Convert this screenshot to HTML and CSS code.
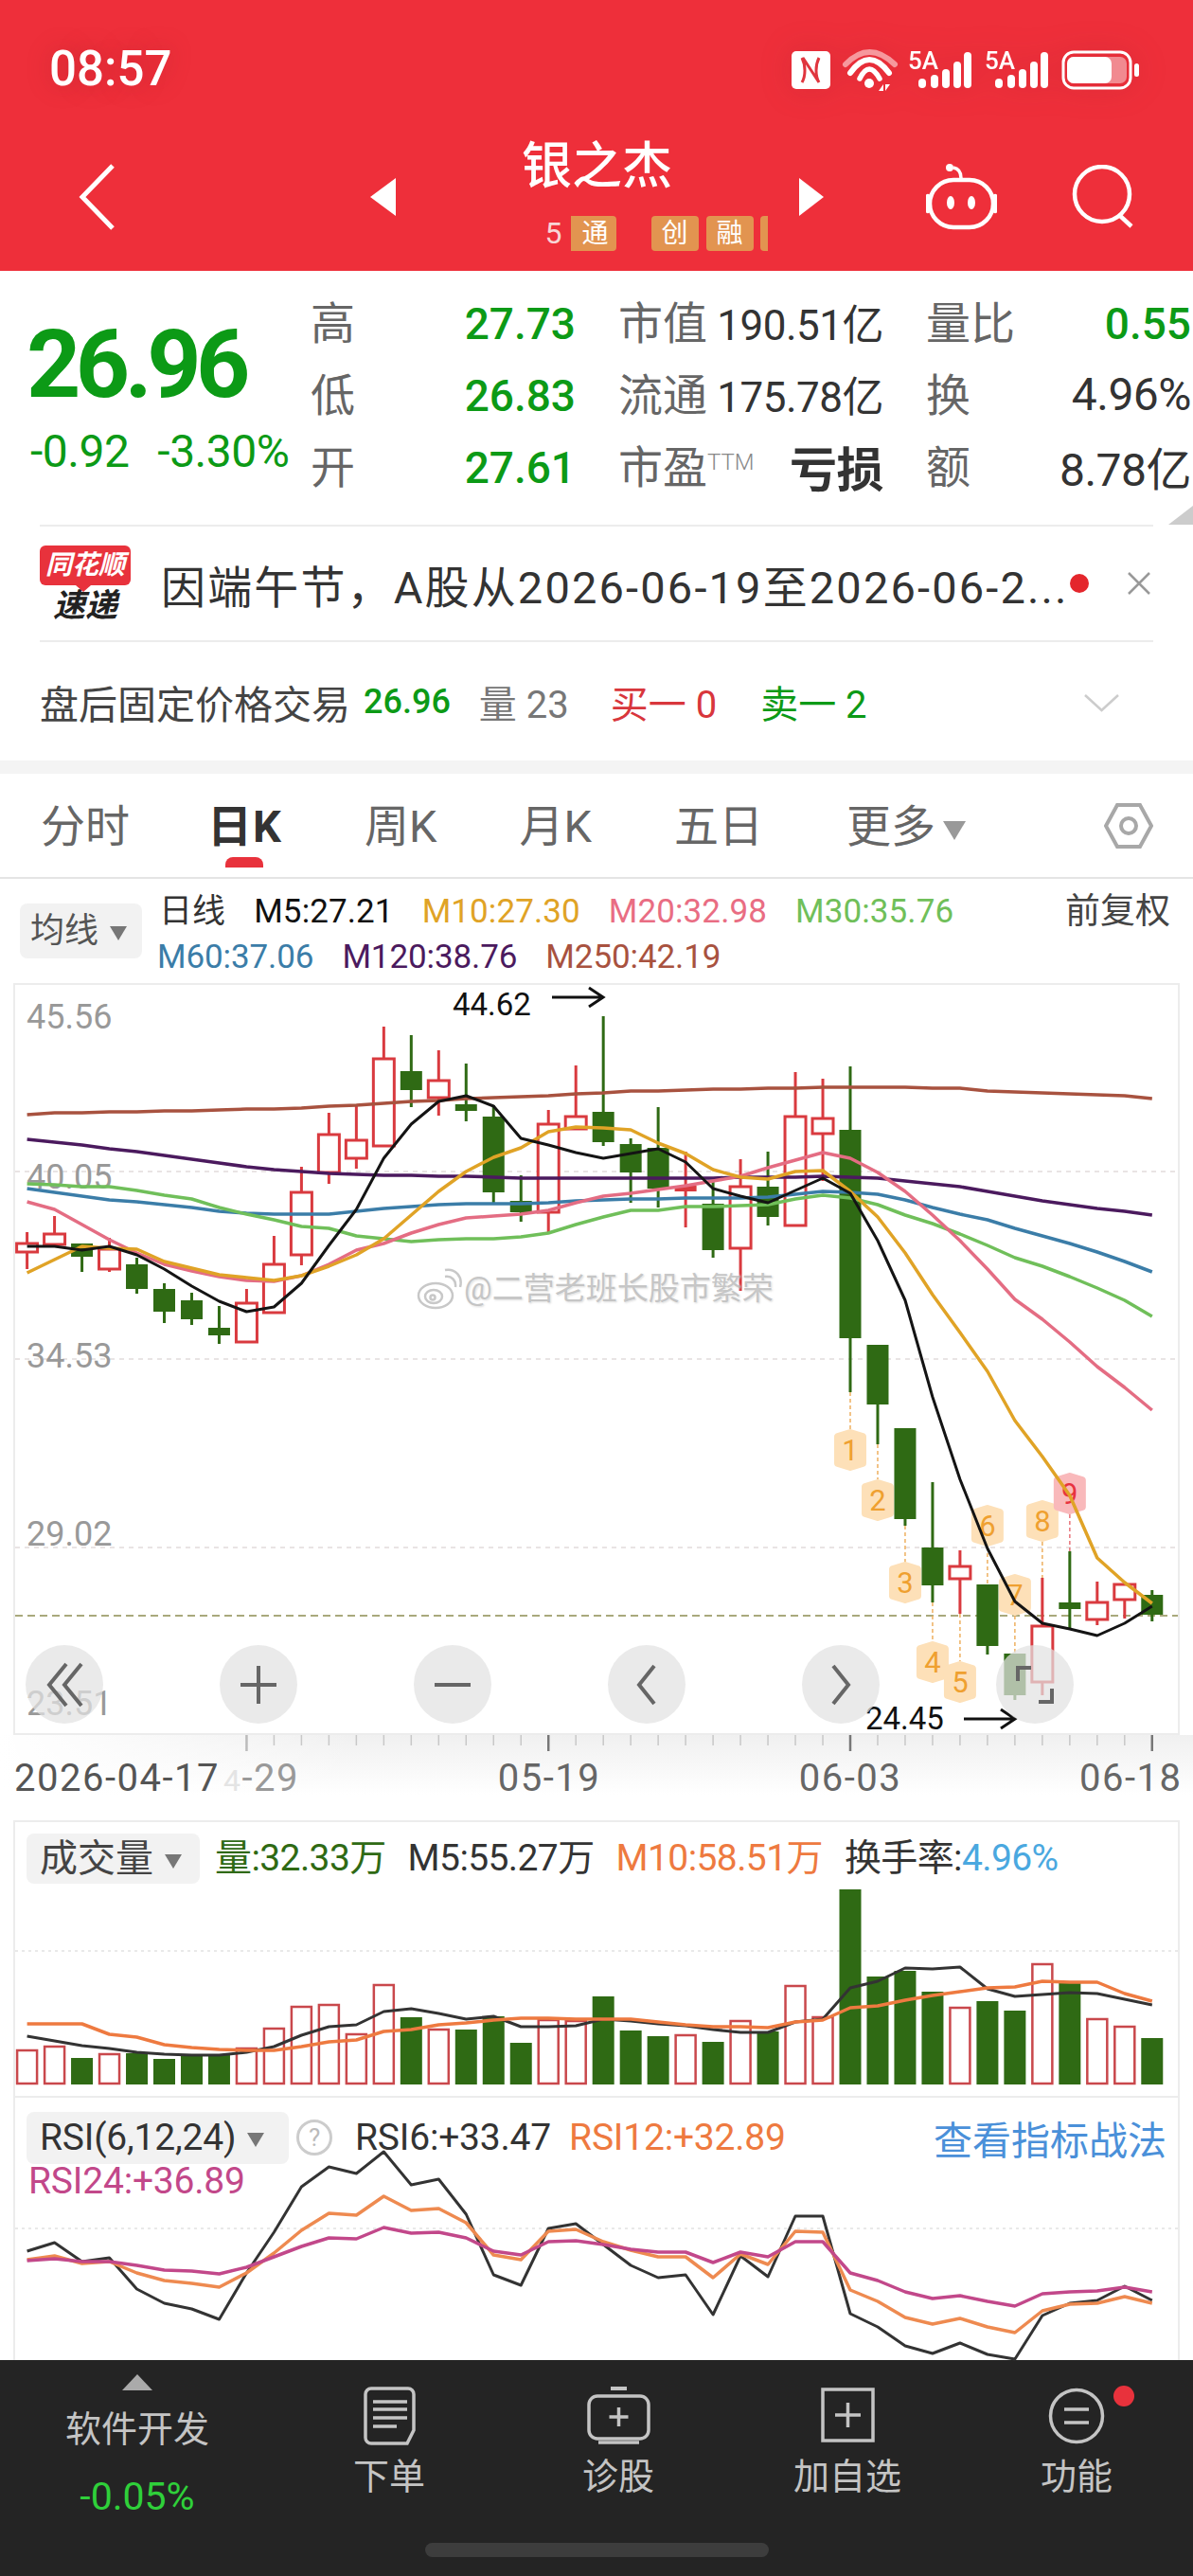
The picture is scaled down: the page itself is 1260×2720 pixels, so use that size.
FILE: index.html
```html
<!DOCTYPE html>
<html lang="zh-CN">
<head>
    <meta charset="UTF-8">
    <meta name="viewport" content="width=device-width, initial-scale=1.0">
    <title>银之杰</title>
    <link rel="stylesheet" href="styles.css">
</head>
<body>
<div class="phone">

    <header class="top">
        <div class="status-bar">
            <span class="time">08:57</span>
            <svg class="status-icons" width="367" height="45" viewBox="0 0 367 45">
                <rect x="0" y="2" width="41" height="40" rx="5" fill="#fff"/>
                <path d="M11 9c4 8 4 19 0 26M12 9l17 26M29 9c-4 8-4 19 0 26" fill="none" stroke="#e0353e" stroke-width="3"/>
                <path d="M57 16Q82 -10 109 16" fill="none" stroke="#f6989d" stroke-width="6" stroke-linecap="round"/>
                <path d="M62 25Q82 -3 103 25" fill="none" stroke="#fff" stroke-width="6" stroke-linecap="round"/>
                <path d="M72 31Q82 11 93 31" fill="none" stroke="#fff" stroke-width="5.5" stroke-linecap="round"/>
                <circle cx="82" cy="36" r="5" fill="#fff"/>
                <path d="M92 44l5-7v7zM99 37v7l5-7z" fill="#fff"/>
                <g fill="#fff">
                    <text class="net" x="123" y="21">5A</text>
                    <rect x="134" y="31" width="8" height="10" rx="4"/>
                    <rect x="147" y="27" width="8" height="14" rx="4"/>
                    <rect x="159" y="21" width="8" height="20" rx="4"/>
                    <rect x="171" y="13" width="8" height="28" rx="4"/>
                    <rect x="182" y="3" width="8" height="38" rx="4"/>
                    <text class="net" x="204" y="21">5A</text>
                    <rect x="215" y="31" width="8" height="10" rx="4"/>
                    <rect x="228" y="27" width="8" height="14" rx="4"/>
                    <rect x="240" y="21" width="8" height="20" rx="4"/>
                    <rect x="252" y="13" width="8" height="28" rx="4"/>
                    <rect x="263" y="3" width="8" height="38" rx="4"/>
                </g>
                <rect x="287" y="3" width="71" height="38" rx="11" fill="none" stroke="#fff" stroke-width="3"/>
                <rect x="291" y="8" width="63" height="28" rx="7" fill="#f18a90"/>
                <rect x="291" y="8" width="47" height="28" rx="7" fill="#fff"/>
                <rect x="362" y="15" width="5" height="14" rx="2.5" fill="#fff"/>
            </svg>
        </div>
        <div class="title-bar">
            <svg class="back" width="39" height="70" viewBox="0 0 39 70"><path d="M36 2L4 35l32 33" fill="none" stroke="#fff" stroke-width="5"/></svg>
            <div class="stock-switch">
                <span class="tri tri-left"></span>
                <div class="stock-name">
                    <div class="stock-title">银之杰</div>
                    <div class="stock-tags">
                        <span class="tag-num">5</span>
                        <span class="tag tag-cut">通</span>
                        <span class="tag tag-gap">创</span>
                        <span class="tag">融</span>
                        <span class="tag tag-end"></span>
                    </div>
                </div>
                <span class="tri tri-right"></span>
            </div>
            <div class="title-actions">
                <svg width="75" height="70" viewBox="0 0 75 70" fill="none" stroke="#fff" stroke-width="4.5">
                    <rect x="4" y="17" width="67" height="50" rx="25"/>
                    <path d="M37 15c0-6-3-10-8-11" stroke-width="3.5"/>
                    <circle cx="25" cy="4" r="4" fill="#fff" stroke="none"/>
                    <path d="M2 34v16M73 34v16" stroke-linecap="round"/>
                    <ellipse cx="26" cy="41" rx="4" ry="7" fill="#fff" stroke="none"/>
                    <ellipse cx="48" cy="41" rx="4" ry="7" fill="#fff" stroke="none"/>
                </svg>
                <svg width="66" height="68" viewBox="0 0 66 68" fill="none" stroke="#fff" stroke-width="4.5">
                    <circle cx="32" cy="31" r="29"/>
                    <path d="M50 53l13 12"/>
                </svg>
            </div>
        </div>
    </header>

    <section class="quote">
        <div class="quote-price">
            <div class="price">26.96</div>
            <div class="change"><span>-0.92</span><span>-3.30%</span></div>
        </div>
        <div class="quote-grid">
            <div class="stat"><span class="stat-label">高</span><span class="val-green">27.73</span></div>
            <div class="stat"><span class="stat-label">市值</span><span class="val">190.51亿</span></div>
            <div class="stat"><span class="stat-label">量比</span><span class="val-green">0.55</span></div>
            <div class="stat"><span class="stat-label">低</span><span class="val-green">26.83</span></div>
            <div class="stat"><span class="stat-label">流通</span><span class="val">175.78亿</span></div>
            <div class="stat"><span class="stat-label">换</span><span class="val val-right">4.96%</span></div>
            <div class="stat"><span class="stat-label">开</span><span class="val-green">27.61</span></div>
            <div class="stat"><span class="stat-label">市盈<sup class="ttm">TTM</sup></span><span class="val val-strong">亏损</span></div>
            <div class="stat"><span class="stat-label">额</span><span class="val val-right">8.78亿</span></div>
        </div>
        <span class="corner-fold"></span>
    </section>

    <section class="notice">
        <div class="notice-logo">
            <span class="notice-flag">同花顺</span>
            <span class="notice-sub">速递</span>
        </div>
        <div class="notice-text">因端午节，A股从2026-06-19至2026-06-2...</div>
        <span class="notice-dot"></span>
        <svg class="notice-close" width="26" height="24" viewBox="0 0 26 24"><path d="M2 1l22 22M24 1L2 23" stroke="#999" stroke-width="2.5"/></svg>
    </section>

    <section class="after-hours">
        <span class="ah-title">盘后固定价格交易</span>
        <span class="ah-green ah-price">26.96</span>
        <span class="ah-grey ah-vol">量&nbsp;23</span>
        <span class="ah-red">买一&nbsp;0</span>
        <span class="ah-green ah-sell">卖一&nbsp;2</span>
        <svg class="ah-more" width="37" height="19" viewBox="0 0 37 19"><path d="M1 1l17.500 16L36 1" fill="none" stroke="#ccc" stroke-width="2.500"/></svg>
    </section>
    <div class="band"></div>

    <nav class="tabs">
        <span class="tab">分时</span>
        <span class="tab tab-active">日K</span>
        <span class="tab">周K</span>
        <span class="tab">月K</span>
        <span class="tab">五日</span>
        <span class="tab tab-more">更多<i class="caret caret-tab"></i></span>
        <svg class="tab-gear" width="52" height="50" viewBox="0 0 52 50" fill="none" stroke="#a8a8a8" stroke-width="4">
            <path d="M14 3h24l12 22-12 22H14L2 25z"/>
            <circle cx="26" cy="25" r="8"/>
        </svg>
    </nav>

    <section class="ma-legend">
        <div class="pill pill-ma">均线<i class="caret"></i></div>
        <div class="ma-rows">
            <div class="ma-row">
                <span class="ma-kind">日线</span>
                <span class="c-m5">M5:27.21</span>
                <span class="c-m10">M10:27.30</span>
                <span class="c-m20">M20:32.98</span>
                <span class="c-m30">M30:35.76</span>
            </div>
            <div class="ma-row ma-row-tight">
                <span class="c-m60">M60:37.06</span>
                <span class="c-m120">M120:38.76</span>
                <span class="c-m250">M250:42.19</span>
            </div>
        </div>
        <span class="adjust">前复权</span>
    </section>

    <section class="panel panel-kline">
        <svg id="kline" class="chart" width="1228" height="790" viewBox="16 1040 1228 790">
            <path class="grid-dash" d="M16 1237H1244M16 1435H1244M16 1634H1244"/>
            <path class="grid-last" d="M16 1706H1244"/>
            <text class="axis-label" x="28" y="1086">45.56</text>
            <text class="axis-label" x="28" y="1255">40.05</text>
            <text class="axis-label" x="28" y="1444">34.53</text>
            <text class="axis-label" x="28" y="1632">29.02</text>
            <text class="axis-label" x="28" y="1811">23.51</text>
            <g id="kline-marks"></g>
            <g id="kline-candles"></g>
            <g id="kline-lines"></g>
            <text class="extreme" x="478" y="1072">44.62</text>
            <path class="extreme-arrow" d="M583 1053h54M622 1043l15 10-15 10"/>
            <text class="extreme" x="914" y="1826">24.45</text>
            <path class="extreme-arrow" d="M1018 1815h54M1057 1805l15 10-15 10"/>
        </svg>
        <div class="watermark">
            <svg width="48" height="44" viewBox="0 0 48 44" fill="none" stroke="#c8c8c8" stroke-width="2.500">
                <ellipse cx="20" cy="29" rx="18" ry="13"/>
                <ellipse cx="18" cy="30" rx="9" ry="7"/>
                <circle cx="17" cy="31" r="2.500"/>
                <path d="M30 9c7-1 12 4 11 11M30 2c11-2 19 7 16 18"/>
            </svg>
            <span>@二营老班长股市繁荣</span>
        </div>
        <div class="chart-tools">
            <button class="tool"><svg width="40" height="48" viewBox="0 0 40 48"><path d="M22 2L4 24l18 22M38 2L20 24l18 22"/></svg></button>
            <button class="tool"><svg width="40" height="48" viewBox="0 0 40 48"><path d="M20 4v40M1 24h38"/></svg></button>
            <button class="tool"><svg width="40" height="48" viewBox="0 0 40 48"><path d="M1 24h38"/></svg></button>
            <button class="tool"><svg width="24" height="48" viewBox="0 0 24 48"><path d="M20 4L4 24l16 20"/></svg></button>
            <button class="tool"><svg width="24" height="48" viewBox="0 0 24 48"><path d="M4 4l16 20L4 44"/></svg></button>
            <button class="tool"><svg width="42" height="48" viewBox="0 0 42 48"><path d="M3 20V6h14M39 28v14H25"/></svg></button>
        </div>
    </section>

    <div class="axis">
        <svg id="axis" width="1260" height="90" viewBox="0 1832 1260 90">
            <g id="axis-ticks"></g>
            <text class="date date-first" x="15" y="1891">2026-04-17</text>
            <text class="date date-fade" x="236" y="1891"><tspan class="date-ghost">4</tspan><tspan>-29</tspan></text>
            <text class="date date-mid" x="580" y="1891">05-19</text>
            <text class="date date-mid" x="898" y="1891">06-03</text>
            <text class="date" x="1140" y="1891">06-18</text>
        </svg>
    </div>

    <section class="panel panel-vol">
        <div class="vol-head">
            <div class="pill pill-vol">成交量<i class="caret"></i></div>
            <span class="c-vol">量:32.33万</span>
            <span class="c-dark">M5:55.27万</span>
            <span class="c-orange">M10:58.51万</span>
            <span class="c-dark">换手率:<span class="c-turn">4.96%</span></span>
        </div>
        <svg id="vol" class="chart" width="1228" height="218" viewBox="16 1995 1228 218">
            <path class="grid-dot" d="M16 2060H1244"/>
        </svg>
    </section>

    <section class="panel panel-rsi">
        <svg id="rsi" class="chart" width="1228" height="277" viewBox="16 2215 1228 277">
            <path class="grid-dot" d="M16 2353H1244"/>
        </svg>
        <div class="rsi-head">
            <div class="rsi-top">
                <div class="pill pill-rsi">RSI(6,12,24)<i class="caret"></i></div>
                <span class="help">?</span>
                <span class="c-dark rsi-six">RSI6:+33.47</span>
                <span class="c-orange">RSI12:+32.89</span>
                <span class="rsi-link">查看指标战法</span>
            </div>
            <div class="c-pink rsi-long">RSI24:+36.89</div>
        </div>
    </section>

    <footer class="bottom-nav">
        <div class="nav-row">
            <div class="nav-index">
                <i class="nav-up"></i>
                <span class="nav-index-name">软件开发</span>
                <span class="nav-index-pct">-0.05%</span>
            </div>
            <div class="nav-item">
                <svg width="57" height="62" viewBox="0 0 57 62" fill="none" stroke="#c4c4c4" stroke-width="3.500">
                    <path d="M9 2h39a6 6 0 0 1 6 6v38l-7 14H9a6 6 0 0 1-6-6V8a6 6 0 0 1 6-6z"/>
                    <path d="M11 16h36M11 24h36M11 33h36M11 42h25"/>
                </svg>
                <span>下单</span>
            </div>
            <div class="nav-item">
                <svg width="67" height="62" viewBox="0 0 67 62" fill="none" stroke="#c4c4c4" stroke-width="3.500">
                    <path d="M25 2h17" stroke-width="4"/>
                    <rect x="2" y="10" width="63" height="45" rx="9"/>
                    <path d="M33.500 22v20M23.500 32h20M12 59h43" />
                </svg>
                <span>诊股</span>
            </div>
            <div class="nav-item">
                <svg width="57" height="62" viewBox="0 0 57 62" fill="none" stroke="#c4c4c4" stroke-width="3.500">
                    <rect x="2" y="3" width="53" height="54"/>
                    <path d="M28.500 17v26M15 30h27"/>
                </svg>
                <span>加自选</span>
            </div>
            <div class="nav-item">
                <svg width="60" height="62" viewBox="0 0 60 62" fill="none" stroke="#c4c4c4" stroke-width="3.500">
                    <circle cx="30" cy="31" r="27.500"/>
                    <path d="M17 24h26M17 38h26"/>
                </svg>
                <i class="nav-badge"></i>
                <span>功能</span>
            </div>
        </div>
        <div class="home-bar"></div>
    </footer>
</div>
<script src="chart.js"></script>
</body>
</html>
```

FILE: styles.css
```css
:root {
    --red: #ee2f3a;
    --green: #0c9a16;
    --candle-green: #2f6a14;
    --line: #ececec;
}

* {
    box-sizing: border-box;
    margin: 0;
    padding: 0;
}

body {
    font-family: Roboto, "Noto Sans CJK SC", sans-serif;
    background: #fff;
    color: #333;
}

.phone {
    width: 1260px;
    height: 2720px;
    overflow: hidden;
}

/* red header */
.top {
    height: 286px;
    background: var(--red);
    color: #fff;
}

.status-bar {
    height: 130px;
    padding: 52px 57px 0 52px;
    display: flex;
    justify-content: space-between;
    align-items: flex-start;
}

.time {
    font-size: 51px;
    line-height: 42px;
    font-weight: 500;
    text-shadow: 0 0 24px rgba(150, 30, 40, 0.35);
}

.status-icons {
    overflow: visible;
    filter: drop-shadow(0 0 16px rgba(150, 30, 40, 0.2));
}

.net {
    font-size: 26px;
    font-weight: 500;
    font-family: Roboto, sans-serif;
}

.title-bar {
    height: 156px;
    display: grid;
    grid-template-columns: 1fr auto 1fr;
    align-items: center;
}

.back {
    margin-left: 83px;
}

.stock-switch {
    display: flex;
    align-items: center;
    gap: 23px;
}

.tri {
    width: 0;
    height: 0;
    border-top: 20px solid transparent;
    border-bottom: 20px solid transparent;
}

.tri-left {
    border-right: 27px solid #fff;
}

.tri-right {
    border-left: 26px solid #fff;
}

.stock-name {
    width: 380px;
    margin-top: -5px;
}

.stock-title {
    text-align: center;
    font-size: 53px;
    line-height: 60px;
    font-weight: 500;
}

.stock-tags {
    margin: 22px 0 0 135px;
    width: 235px;
    height: 37px;
    display: flex;
    overflow: hidden;
}

.tag-num {
    width: 27px;
    font-size: 32px;
    line-height: 37px;
    flex: none;
    color: #f8d5d5;
}

.tag {
    width: 50px;
    flex: none;
    margin-right: 8px;
    background: #e29450;
    border-radius: 4px;
    font-size: 28px;
    line-height: 37px;
    text-align: center;
    color: #fff;
}

.tag-cut {
    width: 48px;
    margin-right: 37px;
    border-radius: 0 4px 4px 0;
    text-align: right;
    padding-right: 8px;
}

.tag-end {
    margin-left: -1px;
}

.title-actions {
    display: flex;
    justify-content: flex-end;
    align-items: center;
    gap: 79px;
    padding-right: 62px;
}

/* quote block */
.quote {
    height: 268px;
    display: flex;
    position: relative;
}

.quote-price {
    width: 328px;
    padding: 49px 0 0 28px;
    color: var(--green);
}

.price {
    font-size: 100px;
    line-height: 100px;
    font-weight: 700;
    letter-spacing: -5.500px;
}

.change {
    display: flex;
    gap: 30px;
    margin: 17px 0 0 4px;
    font-size: 48px;
    line-height: 50px;
    letter-spacing: -0.500px;
}

.quote-grid {
    width: 930px;
    padding-top: 16px;
    display: grid;
    grid-template-columns: repeat(3, 280px);
    grid-auto-rows: 76px;
    column-gap: 45px;
}

.stat {
    display: flex;
    justify-content: space-between;
    align-items: center;
    white-space: nowrap;
}

.stat-label {
    font-size: 47px;
    color: #666;
    margin-bottom: 5px;
}

.ttm {
    font-size: 24px;
    font-weight: 300;
    vertical-align: 14px;
    line-height: 0;
    color: #888;
}

.val {
    font-size: 44px;
    color: #333;
    letter-spacing: -0.500px;
}

.val-right {
    font-size: 48px;
}

.val-strong {
    font-weight: 700;
    font-size: 50px;
}

.val-green {
    font-size: 46px;
    font-weight: 500;
    color: var(--green);
    margin-top: 3px;
}

.corner-fold {
    position: absolute;
    right: 0;
    bottom: 0;
    border-left: 26px solid transparent;
    border-bottom: 20px solid #ccc;
}

/* notice */
.notice {
    height: 124px;
    margin: 0 42px 0 42px;
    border-top: 2px solid var(--line);
    border-bottom: 2px solid var(--line);
    display: flex;
    align-items: center;
}

.notice-logo {
    width: 96px;
    display: flex;
    flex-direction: column;
    align-items: center;
}

.notice-flag {
    position: relative;
    width: 96px;
    height: 42px;
    background: #e8323c;
    border-radius: 6px;
    color: #fff;
    font-size: 28px;
    line-height: 42px;
    font-weight: 700;
    font-style: italic;
    text-align: center;
}

.notice-flag::after {
    content: "";
    position: absolute;
    left: 38px;
    top: 42px;
    border-left: 8px solid transparent;
    border-right: 8px solid transparent;
    border-top: 7px solid #e8323c;
}

.notice-sub {
    margin-top: 3px;
    font-size: 34px;
    line-height: 36px;
    font-weight: 700;
    font-style: italic;
    color: #222;
}

.notice-text {
    margin-left: 32px;
    width: 958px;
    font-size: 47px;
    color: #333;
    white-space: nowrap;
    letter-spacing: 2.150px;
}

.notice-dot {
    width: 20px;
    height: 20px;
    border-radius: 50%;
    background: #e4262c;
    flex: none;
    margin-left: 2px;
}

.notice-close {
    margin-left: 40px;
}

.after-hours {
    height: 125px;
    padding-left: 42px;
    display: flex;
    align-items: center;
    font-size: 40px;
    white-space: nowrap;
    position: relative;
}

.ah-title {
    color: #444;
    font-size: 41px;
    width: 342px;
}

.ah-green {
    color: var(--green);
}

.ah-price {
    font-size: 36px;
    font-weight: 500;
}

.ah-grey {
    color: #777;
}

.ah-vol {
    margin-left: 30px;
}

.ah-red {
    color: #d8363c;
    margin-left: 44px;
}

.ah-sell {
    margin-left: 46px;
}

.ah-more {
    position: absolute;
    left: 1145px;
    top: 55px;
}

.band {
    height: 14px;
    background: #f4f4f4;
}

/* tabs */
.tabs {
    height: 111px;
    padding: 0 0 6px 43px;
    border-bottom: 2px solid #e4e4e4;
    display: flex;
    align-items: center;
    gap: 87px;
    font-size: 47px;
    color: #666;
    position: relative;
}

.tab {
    white-space: nowrap;
}

.tab-active {
    font-weight: 700;
    color: #333;
    position: relative;
    margin-left: -5px;
    letter-spacing: 1px;
}

.tab-active::after {
    content: "";
    position: absolute;
    left: 19px;
    top: 71px;
    width: 40px;
    height: 11px;
    background: #e8323c;
    border-radius: 8px 8px 0 0;
}

.tab-more {
    margin-left: 1px;
}

.tab-gear {
    position: absolute;
    right: 42px;
    top: 30px;
}

.caret {
    display: inline-block;
    margin-left: 12px;
    vertical-align: middle;
    border-left: 9px solid transparent;
    border-right: 9px solid transparent;
    border-top: 15px solid #777;
}

.caret-tab {
    border-left-width: 12px;
    border-right-width: 12px;
    border-top: 20px solid #999;
    margin-left: 8px;
}

/* MA legend */
.ma-legend {
    height: 110px;
    display: flex;
    align-items: flex-start;
    position: relative;
}

.pill {
    background: #f2f2f2;
    border-radius: 8px;
    white-space: nowrap;
}

.pill-ma {
    margin: 26px 0 0 21px;
    width: 129px;
    height: 58px;
    padding-left: 11px;
    font-size: 36px;
    line-height: 58px;
    color: #555;
}

.ma-rows {
    margin-left: 18px;
    padding-top: 11px;
}

.ma-row {
    display: flex;
    gap: 30px;
    font-size: 35px;
    line-height: 48px;
    letter-spacing: 0.100px;
    white-space: nowrap;
}

.ma-row-tight {
    margin-left: -2px;
    letter-spacing: -0.100px;
}

.ma-kind {
    color: #333;
}

.adjust {
    position: absolute;
    left: 1125px;
    top: 12px;
    font-size: 37px;
    line-height: 46px;
    color: #444;
}

.c-m5 { color: #111; }
.c-m10 { color: #e0a326; }
.c-m20 { color: #e96d83; }
.c-m30 { color: #70bf5a; }
.c-m60 { color: #3b7da8; }
.c-m120 { color: #4b1a5e; }
.c-m250 { color: #a8523f; }

/* chart panels */
.panel {
    margin: 0 14px;
    border: 2px solid var(--line);
    position: relative;
}

.chart {
    display: block;
    overflow: visible;
}

.panel-kline {
    height: 794px;
}

.grid-dash {
    fill: none;
    stroke: #e2dcdc;
    stroke-width: 1.500;
    stroke-dasharray: 5 5;
}

.grid-last {
    fill: none;
    stroke: #a9a97c;
    stroke-width: 2;
    stroke-dasharray: 8 5;
}

.grid-dot {
    fill: none;
    stroke: #e2e2e2;
    stroke-width: 1.500;
    stroke-dasharray: 3 4;
}

.axis-label {
    font-size: 36px;
    fill: #999;
}

.extreme {
    font-size: 33px;
    fill: #111;
}

.extreme-arrow {
    fill: none;
    stroke: #111;
    stroke-width: 3;
}

.watermark {
    position: absolute;
    left: 424px;
    top: 299px;
    display: flex;
    align-items: center;
    gap: 2px;
    font-size: 33px;
    line-height: 44px;
    white-space: nowrap;
    color: rgba(170, 170, 170, 0.65);
    text-shadow: 0 0 3px #fff, 1px 1px 2px rgba(120, 120, 120, 0.35);
}

.chart-tools {
    position: absolute;
    left: 11px;
    top: 697px;
    display: flex;
    gap: 123px;
}

.tool {
    width: 82px;
    height: 83px;
    border: none;
    border-radius: 50%;
    background: rgba(226, 226, 226, 0.72);
    display: flex;
    align-items: center;
    justify-content: center;
}

.tool svg {
    fill: none;
    stroke: #666;
    stroke-width: 4;
}

.axis {
    height: 90px;
    background: linear-gradient(90deg, #fff 0, rgba(255, 255, 255, 0) 30%), linear-gradient(#f0f0f0, #fff 70%);
}

.date {
    font-size: 40px;
    fill: #666;
    letter-spacing: 1.500px;
}

.date-first {
    fill: #555;
}

.date-ghost {
    fill: #e4e4e4;
    font-size: 32px;
}

.date-fade {
    fill: #999;
}

.date-mid {
    text-anchor: middle;
}

/* volume */
.panel-vol {
    height: 291px;
    border-bottom: none;
}

.vol-head {
    height: 71px;
    padding: 12px 0 0 12px;
    display: flex;
    align-items: flex-start;
    gap: 23px;
    font-size: 39px;
    line-height: 53px;
    white-space: nowrap;
    letter-spacing: -0.600px;
}

.pill-vol {
    width: 183px;
    height: 53px;
    padding-left: 14px;
    font-size: 40px;
    color: #444;
    margin-right: -7px;
    letter-spacing: 0;
}

.c-vol { color: #2f6a14; }
.c-dark { color: #333; }
.c-orange { color: #ee7a40; }
.c-turn { color: #4aa8e0; }
.c-pink { color: #c2488a; }

/* rsi */
.panel-rsi {
    height: 279px;
    border-bottom: none;
}

.rsi-head {
    position: absolute;
    left: 12px;
    right: 12px;
    top: 12px;
    font-size: 39px;
    white-space: nowrap;
    letter-spacing: -0.200px;
}

.rsi-top {
    display: flex;
    align-items: center;
}

.pill-rsi {
    width: 277px;
    height: 55px;
    padding-left: 14px;
    line-height: 55px;
    color: #333;
}

.help {
    width: 38px;
    height: 38px;
    margin: 0 24px 0 8px;
    border: 3px solid #ccc;
    border-radius: 50%;
    font-size: 26px;
    line-height: 32px;
    text-align: center;
    color: #bbb;
}

.rsi-six {
    margin-right: 19px;
}

.rsi-link {
    margin-left: auto;
    font-size: 41px;
    letter-spacing: 0;
    color: #4a90d9;
}

.rsi-long {
    margin: -7px 0 0 2px;
    line-height: 46px;
}

/* bottom bar */
.bottom-nav {
    height: 228px;
    background: #242424;
    color: #c4c4c4;
}

.nav-row {
    height: 193px;
    display: grid;
    grid-template-columns: 290px repeat(4, 242px);
}

.nav-index {
    display: flex;
    flex-direction: column;
    align-items: center;
    padding-top: 15px;
}

.nav-up {
    border-left: 16px solid transparent;
    border-right: 16px solid transparent;
    border-bottom: 17px solid #aaa;
}

.nav-index-name {
    margin-top: 13px;
    font-size: 38px;
    line-height: 56px;
}

.nav-index-pct {
    margin-top: 15px;
    font-size: 41px;
    line-height: 56px;
    color: #2fd03a;
}

.nav-item {
    position: relative;
    display: flex;
    flex-direction: column;
    align-items: center;
    padding-top: 28px;
    font-size: 38px;
    line-height: 50px;
}

.nav-item span {
    margin-top: 8px;
}

.nav-badge {
    position: absolute;
    left: 160px;
    top: 27px;
    width: 22px;
    height: 22px;
    border-radius: 50%;
    background: #e8323c;
}

.home-bar {
    width: 363px;
    height: 15px;
    margin-left: 449px;
    border-radius: 8px;
    background: #3d3d3d;
}
```

FILE: chart.js
```js
const X = (i) => 28.6 + 28.98 * i;
const NS = 'http://www.w3.org/2000/svg';

const add = (parent, tag, attrs, text) => {
    const node = document.createElementNS(NS, tag);
    Object.keys(attrs).forEach((k) => node.setAttribute(k, attrs[k]));
    if (text !== undefined) node.textContent = text;
    parent.appendChild(node);
    return node;
};

const COLORS = {
    red: '#d93a3f',
    green: '#2f6a14',
    m5: '#141414',
    m10: '#e0a326',
    m20: '#e46d83',
    m30: '#70bf5a',
    m60: '#3b7da8',
    m120: '#4b1a5e',
    m250: '#a8523f'
};

// type (r hollow, R solid, g), high, body top, body bottom, low
const candles = [
    ['r', 1301, 1313, 1322, 1340], ['r', 1284, 1303, 1314, 1314], ['g', 1313, 1313, 1327, 1343],
    ['r', 1307, 1319, 1340, 1343], ['g', 1328, 1335, 1361, 1366], ['g', 1355, 1361, 1385, 1397],
    ['g', 1365, 1373, 1393, 1399], ['g', 1379, 1402, 1410, 1419], ['r', 1361, 1376, 1417, 1417],
    ['r', 1305, 1335, 1386, 1386], ['r', 1232, 1259, 1325, 1336], ['r', 1175, 1198, 1238, 1250],
    ['r', 1168, 1204, 1223, 1234], ['r', 1084, 1118, 1210, 1210], ['g', 1093, 1131, 1151, 1169],
    ['r', 1109, 1141, 1159, 1178], ['g', 1123, 1166, 1173, 1184], ['g', 1167, 1179, 1259, 1272],
    ['g', 1241, 1268, 1280, 1290], ['r', 1172, 1187, 1280, 1303], ['r', 1125, 1179, 1192, 1193],
    ['g', 1073, 1174, 1206, 1210], ['g', 1202, 1208, 1238, 1270], ['g', 1169, 1212, 1255, 1275],
    ['R', 1216, 1252, 1258, 1296], ['g', 1248, 1271, 1320, 1328], ['r', 1224, 1253, 1318, 1363],
    ['g', 1216, 1253, 1285, 1294], ['r', 1132, 1179, 1294, 1294], ['r', 1139, 1181, 1197, 1247],
    ['g', 1126, 1193, 1413, 1470], ['g', 1420, 1420, 1483, 1525], ['g', 1508, 1508, 1604, 1611],
    ['g', 1565, 1634, 1674, 1692], ['r', 1637, 1654, 1667, 1704], ['g', 1673, 1673, 1738, 1747],
    ['g', 1746, 1746, 1790, 1795], ['r', 1666, 1717, 1776, 1790], ['g', 1638, 1692, 1699, 1720],
    ['r', 1670, 1692, 1710, 1716], ['r', 1673, 1673, 1689, 1709], ['g', 1679, 1684, 1705, 1712]
];

const maLines = {
    m250: [1177, 1175, 1175, 1174, 1174, 1173, 1173, 1172, 1171, 1171, 1170, 1168, 1167, 1165, 1163, 1162, 1160, 1159, 1158, 1157, 1155, 1154, 1152, 1152, 1151, 1150, 1150, 1149, 1149, 1148, 1148, 1148, 1148, 1149, 1149, 1152, 1153, 1154, 1155, 1156, 1157, 1160],
    m120: [1203, 1206, 1209, 1213, 1216, 1220, 1224, 1228, 1232, 1235, 1237, 1239, 1240, 1241, 1241, 1242, 1242, 1243, 1244, 1244, 1244, 1244, 1244, 1244, 1244, 1244, 1243, 1243, 1243, 1242, 1243, 1244, 1247, 1250, 1253, 1258, 1263, 1268, 1272, 1276, 1279, 1283],
    m60: [1255, 1259, 1263, 1267, 1269, 1272, 1275, 1279, 1281, 1282, 1282, 1282, 1279, 1276, 1274, 1272, 1271, 1271, 1271, 1270, 1268, 1267, 1266, 1266, 1265, 1265, 1265, 1264, 1261, 1258, 1259, 1261, 1267, 1275, 1282, 1288, 1297, 1305, 1313, 1322, 1332, 1343],
    m30: [1250, 1251, 1253, 1253, 1257, 1262, 1266, 1275, 1282, 1288, 1295, 1297, 1305, 1308, 1311, 1309, 1308, 1308, 1306, 1302, 1293, 1285, 1278, 1278, 1274, 1274, 1273, 1272, 1266, 1262, 1265, 1272, 1283, 1292, 1303, 1315, 1328, 1337, 1348, 1360, 1373, 1390],
    m20: [1269, 1277, 1293, 1309, 1323, 1335, 1342, 1348, 1352, 1353, 1347, 1335, 1320, 1313, 1302, 1293, 1286, 1284, 1282, 1278, 1270, 1263, 1260, 1256, 1252, 1247, 1242, 1233, 1225, 1217, 1223, 1238, 1258, 1283, 1310, 1340, 1372, 1393, 1417, 1443, 1465, 1489],
    m10: [1344, 1330, 1316, 1318, 1319, 1332, 1339, 1346, 1349, 1352, 1347, 1337, 1325, 1308, 1283, 1258, 1237, 1222, 1212, 1195, 1190, 1191, 1193, 1207, 1218, 1235, 1243, 1245, 1237, 1236, 1258, 1285, 1323, 1367, 1407, 1448, 1500, 1538, 1579, 1645, 1671, 1693],
    m5: [1316, 1316, 1320, 1316, 1325, 1340, 1358, 1374, 1385, 1380, 1355, 1315, 1277, 1223, 1187, 1163, 1157, 1168, 1202, 1209, 1217, 1223, 1218, 1213, 1227, 1255, 1263, 1270, 1257, 1244, 1260, 1310, 1373, 1475, 1562, 1635, 1691, 1714, 1720, 1727, 1714, 1696]
};

// sequence number, candle index, tag centre y, dashed line from / to
const marks = [
    [1, 30, 1531, 1470, 1509], [2, 31, 1584, 1525, 1562], [3, 32, 1671, 1611, 1650],
    [4, 33, 1755, 1692, 1733], [5, 34, 1776, 1704, 1754], [6, 35, 1611, 1633, 1673],
    [7, 36, 1684, 1706, 1746], [8, 37, 1606, 1628, 1666], [9, 38, 1577, 1599, 1638]
];

const volTops = [2165, 2161, 2173, 2169, 2168, 2174, 2170, 2170, 2163, 2142, 2119, 2117, 2148, 2096, 2130, 2143, 2143, 2129, 2157, 2133, 2134, 2108, 2144, 2150, 2149, 2156, 2134, 2145, 2097, 2130, 1995, 2087, 2081, 2103, 2120, 2113, 2123, 2074, 2093, 2132, 2140, 2152];
const volM5 = [2150, 2155, 2160, 2163, 2167, 2169, 2170, 2170, 2167, 2161, 2149, 2140, 2138, 2124, 2121, 2126, 2132, 2129, 2140, 2140, 2139, 2132, 2134, 2137, 2139, 2143, 2146, 2146, 2135, 2132, 2099, 2092, 2078, 2079, 2077, 2100, 2108, 2106, 2104, 2105, 2111, 2117];
const volM10 = [2137, 2137, 2137, 2148, 2151, 2159, 2162, 2164, 2165, 2165, 2161, 2156, 2154, 2145, 2143, 2138, 2136, 2133, 2131, 2131, 2132, 2132, 2132, 2135, 2138, 2140, 2140, 2141, 2135, 2133, 2120, 2118, 2112, 2107, 2103, 2099, 2098, 2092, 2093, 2093, 2105, 2113];

const rsi6 = [2377, 2368, 2388, 2384, 2417, 2432, 2438, 2449, 2400, 2357, 2309, 2288, 2295, 2272, 2307, 2301, 2338, 2402, 2413, 2353, 2348, 2370, 2392, 2405, 2402, 2444, 2382, 2404, 2340, 2340, 2443, 2457, 2477, 2485, 2474, 2486, 2491, 2445, 2432, 2429, 2414, 2429];
const rsi12 = [2386, 2382, 2390, 2388, 2400, 2408, 2411, 2415, 2400, 2379, 2355, 2337, 2339, 2319, 2334, 2332, 2347, 2381, 2386, 2356, 2354, 2367, 2376, 2383, 2383, 2405, 2380, 2391, 2356, 2357, 2418, 2430, 2447, 2454, 2448, 2457, 2463, 2440, 2433, 2432, 2425, 2432];
const rsi24 = [2387, 2385, 2388, 2388, 2392, 2397, 2398, 2401, 2394, 2383, 2372, 2363, 2364, 2352, 2358, 2357, 2363, 2377, 2381, 2367, 2366, 2370, 2375, 2378, 2378, 2389, 2378, 2383, 2367, 2367, 2400, 2408, 2420, 2427, 2424, 2430, 2435, 2422, 2420, 2419, 2415, 2420];

const drawLine = (parent, ys, color, width) => {
    const points = ys.map((y, i) => `${X(i).toFixed(1)},${y}`).join(' ');
    add(parent, 'polyline', {
        points,
        fill: 'none',
        stroke: color,
        'stroke-width': width,
        'stroke-linejoin': 'round'
    });
};

const drawMarks = () => {
    const group = document.getElementById('kline-marks');
    marks.forEach(([num, idx, cy, from, to]) => {
        const cx = X(idx);
        const isTop = num === 9;
        const bg = isTop ? '#f9b9bb' : '#fde0b8';
        add(group, 'path', {
            d: `M${cx} ${from}V${to}`,
            stroke: isTop ? '#e8737a' : '#eeb060',
            'stroke-width': 1.5,
            'stroke-dasharray': '4 3'
        });
        add(group, 'path', {
            d: `M${cx - 13} ${cy - 14}L${cx} ${cy - 18}L${cx + 13} ${cy - 14}V${cy + 14}L${cx} ${cy + 18}L${cx - 13} ${cy + 14}Z`,
            fill: bg,
            stroke: bg,
            'stroke-width': 8,
            'stroke-linejoin': 'round'
        });
        add(group, 'text', {
            x: cx,
            y: cy + 11,
            'text-anchor': 'middle',
            'font-size': 31,
            fill: isTop ? '#e8333f' : '#efa030'
        }, num);
    });
};

const drawCandles = () => {
    const group = document.getElementById('kline-candles');
    candles.forEach(([type, high, top, bot, low], i) => {
        const x = X(i);
        const color = type === 'g' ? COLORS.green : COLORS.red;
        add(group, 'path', { d: `M${x} ${high}V${top}M${x} ${bot}V${low}`, stroke: color, 'stroke-width': 3 });
        if (type === 'r') {
            add(group, 'rect', { x: x - 11, y: top, width: 22, height: bot - top, fill: '#fff', stroke: color, 'stroke-width': 3 });
        } else {
            add(group, 'rect', { x: x - 11.5, y: top, width: 23, height: bot - top, fill: color });
        }
    });
    const lines = document.getElementById('kline-lines');
    ['m250', 'm120', 'm60', 'm30', 'm20', 'm10', 'm5'].forEach((key) => {
        drawLine(lines, maLines[key], COLORS[key], key === 'm5' ? 3 : 3.5);
    });
};

const drawAxis = () => {
    const group = document.getElementById('axis-ticks');
    for (let i = 8; i < 42; i++) {
        const major = (i - 8) % 11 === 0;
        add(group, 'path', {
            d: `M${X(i)} 1832v${major ? 17 : 11}`,
            stroke: major ? (i === 8 ? '#bbb' : '#777') : '#c8c8c8',
            'stroke-width': major ? 2.5 : 1.5
        });
    }
};

const drawVolume = () => {
    const svg = document.getElementById('vol');
    volTops.forEach((top, i) => {
        const x = X(i);
        const up = candles[i][0] !== 'g';
        if (up) {
            add(svg, 'rect', { x: x - 10.5, y: top, width: 21, height: 2200 - top, fill: '#fff', stroke: '#c9484c', 'stroke-width': 2.5 });
        } else {
            add(svg, 'rect', { x: x - 11.5, y: top, width: 23, height: 2201 - top, fill: COLORS.green });
        }
    });
    drawLine(svg, volM5, '#333', 3);
    drawLine(svg, volM10, '#ee7a40', 3.5);
};

const drawRsi = () => {
    const svg = document.getElementById('rsi');
    drawLine(svg, rsi6, '#333', 3);
    drawLine(svg, rsi12, '#ee8a50', 3.5);
    drawLine(svg, rsi24, '#c2488a', 3.5);
};

drawMarks();
drawCandles();
drawAxis();
drawVolume();
drawRsi();
```
